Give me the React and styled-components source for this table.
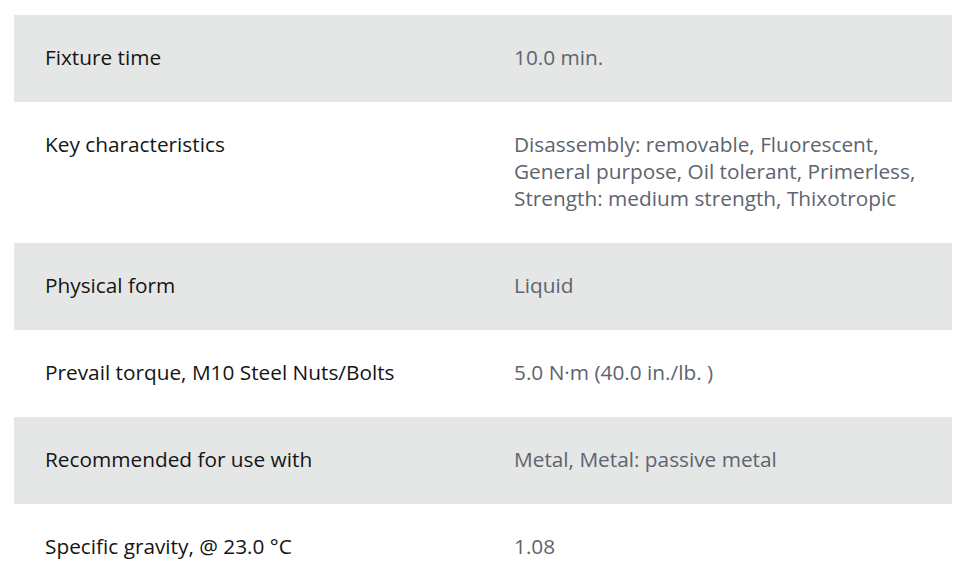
import React from 'react'
import styled, { createGlobalStyle } from 'styled-components'

const GlobalStyle = createGlobalStyle`
  body {
    margin: 0;
    background: #ffffff;
    font-family: "Open Sans", "Noto Sans", sans-serif;
  }
`

const Page = styled.div`
  padding: 15px 26px 0 14px;
`

const Table = styled.div`
  width: 938px;
  display: flex;
  flex-direction: column;
`

const Row = styled.div`
  display: grid;
  grid-template-columns: 1fr 1fr;
  background: ${p => (p.$shaded ? '#e5e6e6' : '#ffffff')};
  font-size: 20.8px;
  line-height: 27px;
`

const Label = styled.div`
  padding: 29px 31px 31px;
  color: #151515;
`

const Value = styled.div`
  padding: 29px 31px 31px;
  color: #5d6470;
`

const rows = [
  { label: 'Fixture time', value: '10.0 min.' },
  {
    label: 'Key characteristics',
    value: [
      'Disassembly: removable, Fluorescent,',
      'General purpose, Oil tolerant, Primerless,',
      'Strength: medium strength, Thixotropic'
    ]
  },
  { label: 'Physical form', value: 'Liquid' },
  { label: 'Prevail torque, M10 Steel Nuts/Bolts', value: '5.0 N·m (40.0 in./lb. )' },
  { label: 'Recommended for use with', value: 'Metal, Metal: passive metal' },
  { label: 'Specific gravity, @ 23.0 °C', value: '1.08' }
]

export default function App() {
  return (
    <Page>
      <GlobalStyle />
      <Table>
        {rows.map((row, i) => (
          <Row key={row.label} $shaded={i % 2 === 0}>
            <Label>{row.label}</Label>
            <Value>
              {Array.isArray(row.value)
                ? row.value.map(line => <div key={line}>{line}</div>)
                : row.value}
            </Value>
          </Row>
        ))}
      </Table>
    </Page>
  )
}
